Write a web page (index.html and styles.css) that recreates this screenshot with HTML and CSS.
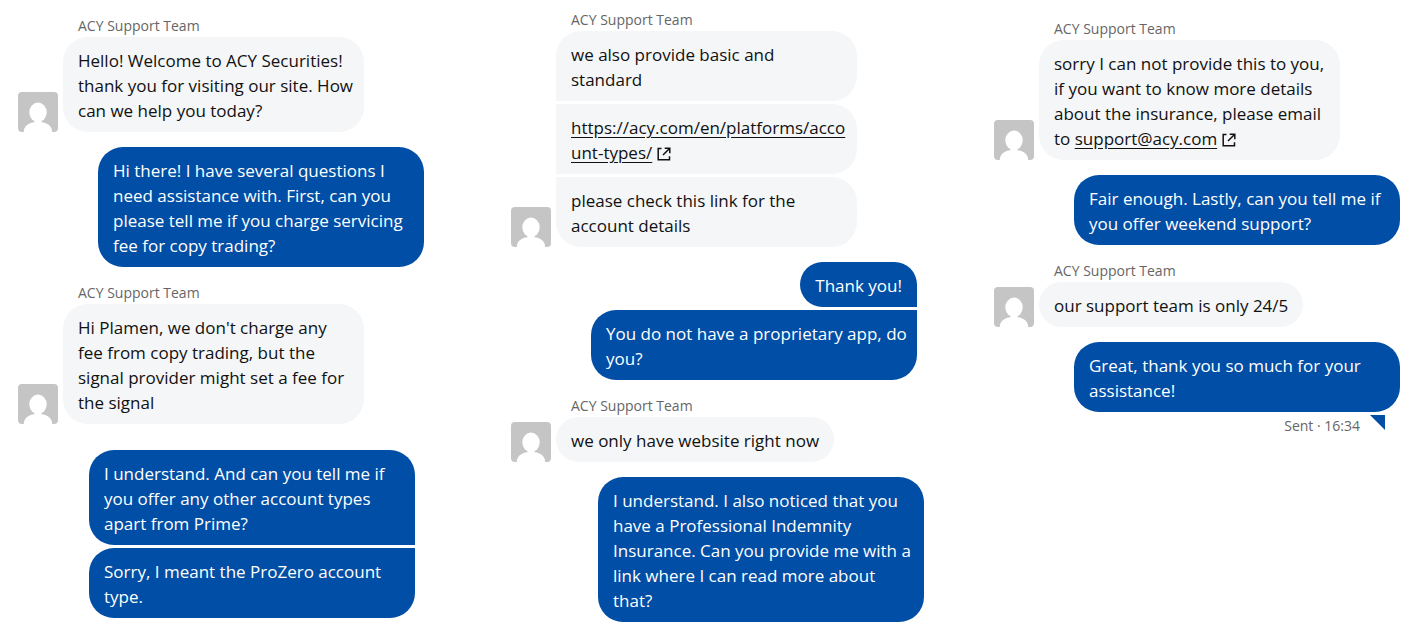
FILE: index.html
```html
<!DOCTYPE html>
<html lang="en">
<head>
<meta charset="utf-8">
<meta name="viewport" content="width=device-width, initial-scale=1">
<title>ACY Support Team chat</title>
<link rel="stylesheet" href="styles.css">
</head>
<body>
<svg class="defs" aria-hidden="true">
  <symbol id="avatar" viewBox="0 0 40 40">
    <rect width="40" height="40" rx="4" fill="#c5c5c5"/>
    <ellipse cx="20" cy="20.300" rx="8.700" ry="9.700" fill="#fff"/>
    <path d="M16.500 27h7v3.200c6.500.6 10.700 4.300 10.700 9.800H5.800c0-5.500 4.200-9.200 10.700-9.800z" fill="#fff"/>
  </symbol>
  <symbol id="external" viewBox="0 0 14 14">
    <path d="M4.500 1.500H1.200v11.300h11.300V9.200M7.700 1.200h5.100v5.100M12.500 1.500L6 8" fill="none" stroke="currentColor" stroke-width="1.500"/>
  </symbol>
</svg>
<main class="board">
  <section class="chat chat-first">
    <div class="group agent">
      <p class="name">ACY Support Team</p>
      <svg class="avatar" role="img" aria-label="Agent"><use href="#avatar"/></svg>
      <div class="stack">
        <p class="bubble">Hello! Welcome to ACY Securities!<br>thank you for visiting our site. How<br>can we help you today?</p>
      </div>
    </div>
    <div class="group visitor">
      <p class="bubble">Hi there! I have several questions I<br>need assistance with. First, can you<br>please tell me if you charge servicing<br>fee for copy trading?</p>
    </div>
    <div class="group agent">
      <p class="name">ACY Support Team</p>
      <svg class="avatar" role="img" aria-label="Agent"><use href="#avatar"/></svg>
      <div class="stack">
        <p class="bubble">Hi Plamen, we don't charge any<br>fee from copy trading, but the<br>signal provider might set a fee for<br>the signal</p>
      </div>
    </div>
    <div class="group visitor spaced">
      <p class="bubble">I understand. And can you tell me if<br>you offer any other account types<br>apart from Prime?</p>
      <p class="bubble">Sorry, I meant the ProZero account<br>type.</p>
    </div>
  </section>

  <section class="chat chat-second">
    <div class="group agent">
      <p class="name">ACY Support Team</p>
      <svg class="avatar" role="img" aria-label="Agent"><use href="#avatar"/></svg>
      <div class="stack">
        <p class="bubble">we also provide basic and<br>standard</p>
        <p class="bubble"><a href="https://acy.com/en/platforms/account-types/">https://acy.com/en/platforms/acco<br>unt-types/</a> <svg class="external" aria-hidden="true"><use href="#external"/></svg></p>
        <p class="bubble">please check this link for the<br>account details</p>
      </div>
    </div>
    <div class="group visitor inset">
      <p class="bubble short">Thank you!</p>
      <p class="bubble">You do not have a proprietary app, do<br>you?</p>
    </div>
    <div class="group agent">
      <p class="name">ACY Support Team</p>
      <svg class="avatar" role="img" aria-label="Agent"><use href="#avatar"/></svg>
      <div class="stack">
        <p class="bubble short">we only have website right now</p>
      </div>
    </div>
    <div class="group visitor">
      <p class="bubble">I understand. I also noticed that you<br>have a Professional Indemnity<br>Insurance. Can you provide me with a<br>link where I can read more about<br>that?</p>
    </div>
  </section>

  <section class="chat chat-third">
    <div class="group agent">
      <p class="name">ACY Support Team</p>
      <svg class="avatar" role="img" aria-label="Agent"><use href="#avatar"/></svg>
      <div class="stack">
        <p class="bubble">sorry I can not provide this to you,<br>if you want to know more details<br>about the insurance, please email<br>to <a href="mailto:support@acy.com">support@acy.com</a> <svg class="external" aria-hidden="true"><use href="#external"/></svg></p>
      </div>
    </div>
    <div class="group visitor">
      <p class="bubble">Fair enough. Lastly, can you tell me if<br>you offer weekend support?</p>
    </div>
    <div class="group agent">
      <p class="name">ACY Support Team</p>
      <svg class="avatar" role="img" aria-label="Agent"><use href="#avatar"/></svg>
      <div class="stack">
        <p class="bubble short">our support team is only 24/5</p>
      </div>
    </div>
    <div class="group visitor">
      <p class="bubble">Great, thank you so much for your<br>assistance!</p>
      <p class="status">Sent · 16:34 <svg class="tail" viewBox="0 0 15 15" aria-hidden="true"><path d="M0 0h15v15z" fill="#004ea5"/></svg></p>
    </div>
  </section>
</main>
</body>
</html>
```
FILE: styles.css
```css
* {
  box-sizing: border-box;
}

body {
  margin: 0;
  background: #fff;
  color: #111;
  font: 17px/25px "Segoe UI", "Open Sans", "Noto Sans", sans-serif;
}

p {
  margin: 0;
}

.defs {
  display: none;
}

.board {
  display: flex;
  justify-content: space-between;
  align-items: flex-start;
  padding: 0 16px 0 18px;
}

.chat {
  display: flex;
  flex-direction: column;
  gap: 15px;
  width: 406px;
}

.chat-first {
  padding-top: 15px;
}

.chat-second {
  width: 413px;
  margin-left: 17px;
  padding-top: 9px;
}

.chat-third {
  padding-top: 18px;
}

.agent {
  display: grid;
  grid-template-columns: 40px 1fr;
  column-gap: 5px;
  align-items: end;
}

.name {
  grid-column: 2;
  height: 22px;
  padding-left: 15px;
  color: #666;
  font-size: 14px;
  line-height: 22px;
}

.avatar {
  display: block;
  width: 40px;
  height: 40px;
}

.stack,
.visitor {
  display: flex;
  flex-direction: column;
  gap: 3px;
}

.stack {
  align-items: flex-start;
}

.visitor {
  align-items: flex-end;
}

.bubble {
  padding: 11px 15px 9px;
  border-radius: 25px;
  white-space: nowrap;
}

.agent .bubble {
  width: 301px;
  background: #f4f6f8;
}

.visitor .bubble {
  width: 326px;
  background: #004ea5;
  color: #fff;
}

.agent .short,
.visitor .short {
  width: auto;
}

.agent .bubble:not(:last-child) {
  border-bottom-left-radius: 0;
}

.agent .bubble + .bubble {
  border-top-left-radius: 0;
}

.visitor .bubble:has(+ .bubble) {
  border-bottom-right-radius: 0;
}

.visitor .bubble + .bubble {
  border-top-right-radius: 0;
}

.spaced {
  margin: 11px 9px 0 0;
}

.inset {
  margin-right: 7px;
}

a {
  color: inherit;
  text-underline-offset: 3px;
}

.external {
  width: 14px;
  height: 14px;
  vertical-align: -2px;
}

.status {
  display: flex;
  gap: 10px;
  padding-right: 15px;
  color: #666;
  font-size: 14px;
  line-height: 22px;
}

.tail {
  width: 15px;
  height: 15px;
}
```
